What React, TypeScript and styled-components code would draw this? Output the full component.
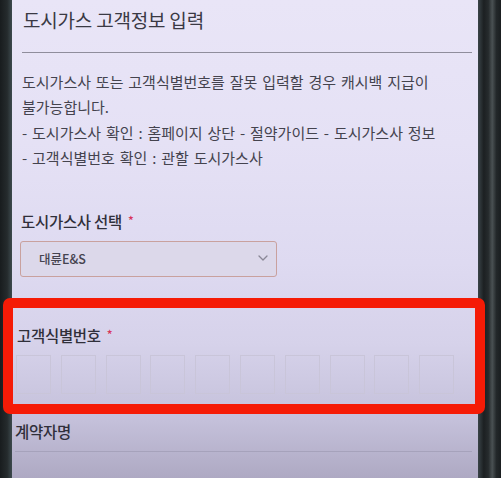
import React from "react";
import styled, { createGlobalStyle } from "styled-components";

const Global = createGlobalStyle`
  html, body { margin: 0; padding: 0; background: #1d2224; }
  #root { width: 501px; height: 478px; overflow: hidden; }
  * { box-sizing: border-box; }
`;

const Frame = styled.div`
  position: relative;
  width: 501px;
  height: 478px;
  display: flex;
  background: #1d2224;
  overflow: hidden;
  font-family: "Noto Sans CJK KR", "Noto Sans", sans-serif;
`;

const LeftBezel = styled.div`
  width: 12px;
  flex: none;
  background: linear-gradient(90deg, #181c1e 0%, #252b2d 60%, #3d4a4e 100%);
`;

const RightBezel = styled.div`
  width: 23px;
  flex: none;
  background: linear-gradient(90deg, #3a4448 0%, #1c2022 25%, #262b2d 45%, #4a5153 62%, #23282a 80%, #1a1e20 100%);
`;

const Screen = styled.div`
  flex: 1;
  display: flex;
  flex-direction: column;
  padding: 0 6px 0 10px;
  color: #3b3a45;
  background: linear-gradient(
    180deg,
    #e9e5f7 0%,
    #e5e1f5 30%,
    #dedaf1 55%,
    #d6d2ea 72%,
    #c4c0da 88%,
    #aea9c3 100%
  );
`;

const Title = styled.h1`
  margin: 6px 0 0 1px;
  font-size: 19px;
  line-height: 28px;
  font-weight: 400;
  color: #3a3944;
  letter-spacing: -0.2px;
`;

const Divider = styled.div`
  margin-top: 18px;
  height: 1px;
  background: #8f8d9c;
`;

const Notice = styled.p`
  margin: 16px 0 0 0;
  font-size: 15px;
  line-height: 25.3px;
  color: #44434e;
  word-spacing: 1.5px;
`;

const Label = styled.div<{ $top: number; $indent: number }>`
  margin-top: ${(p) => p.$top}px;
  margin-left: ${(p) => p.$indent}px;
  font-size: 15.5px;
  line-height: 24px;
  font-weight: 500;
  color: #302f3a;
  letter-spacing: -0.3px;
`;

const Star = styled.span`
  color: #d8345a;
  font-size: 12px;
  margin-left: 6px;
  vertical-align: 3px;
`;

const Select = styled.div`
  margin-top: 8px;
  margin-left: -2px;
  width: 257px;
  height: 36px;
  display: flex;
  align-items: center;
  justify-content: space-between;
  padding: 0 8px 2px 18px;
  border: 1.5px solid #c9a19e;
  border-radius: 3px;
  background: #dcd8ea;
  font-size: 12.5px;
  font-weight: 500;
  color: #45434f;
`;

const Boxes = styled.div`
  margin-top: 8px;
  margin-left: -6px;
  display: flex;
  gap: 9.8px;
`;

const Box = styled.div`
  width: 35px;
  height: 39px;
  border: 1px solid #c9c5d9;
  background: transparent;
`;

const InputLine = styled.div`
  margin-top: 8px;
  margin-left: -7px;
  height: 1px;
  background: #a6a2bb;
`;

const Highlight = styled.div`
  position: absolute;
  left: 3px;
  top: 298px;
  width: 482px;
  height: 116px;
  border: 10px solid #f51b06;
  border-radius: 7px;
  pointer-events: none;
`;

export default function App() {
  return (
    <>
      <Global />
      <Frame>
        <LeftBezel />
        <Screen>
          <Title>도시가스 고객정보 입력</Title>
          <Divider />
          <Notice>
            도시가스사 또는 고객식별번호를 잘못 입력할 경우 캐시백 지급이
            <br />
            불가능합니다.
            <br />- 도시가스사 확인 : 홈페이지 상단 - 절약가이드 - 도시가스사 정보
            <br />- 고객식별번호 확인 : 관할 도시가스사
          </Notice>
          <Label $top={38} $indent={-1}>
            도시가스사 선택<Star>*</Star>
          </Label>
          <Select>
            <span>대륜E&amp;S</span>
            <svg width="10" height="6" viewBox="0 0 10 6" fill="none">
              <path d="M1 1l4 4 4-4" stroke="#8a8796" strokeWidth="1.3" strokeLinecap="round" strokeLinejoin="round" />
            </svg>
          </Select>
          <Label $top={45} $indent={-5}>
            고객식별번호<Star>*</Star>
          </Label>
          <Boxes>
            {Array.from({ length: 10 }).map((_, i) => (
              <Box key={i} />
            ))}
          </Boxes>
          <Label $top={25} $indent={-7}>계약자명</Label>
          <InputLine />
        </Screen>
        <RightBezel />
        <Highlight />
      </Frame>
    </>
  );
}
